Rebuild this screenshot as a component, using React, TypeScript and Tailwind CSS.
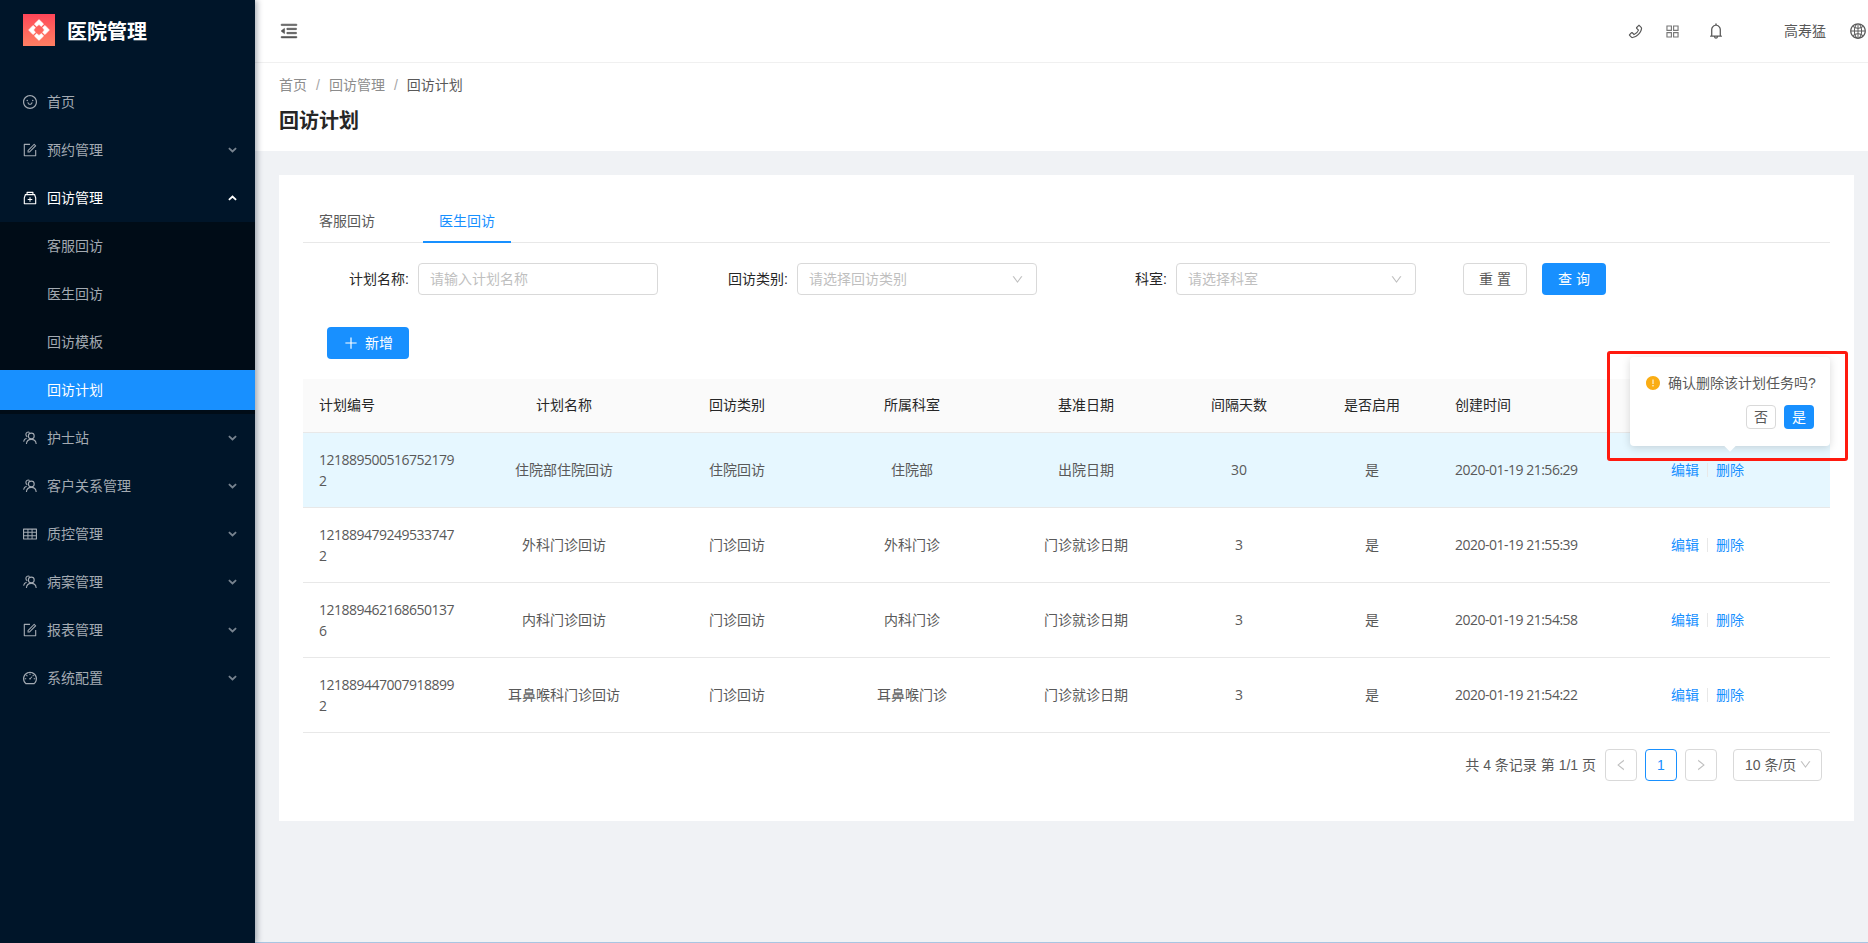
import type { ReactNode } from 'react'
import {
  AiFillExclamationCircle,
  AiOutlineAppstore,
  AiOutlineBell,
  AiOutlineDashboard,
  AiOutlineDown,
  AiOutlineForm,
  AiOutlineGlobal,
  AiOutlineLeft,
  AiOutlineMedicineBox,
  AiOutlineMenuFold,
  AiOutlinePhone,
  AiOutlinePlus,
  AiOutlineRight,
  AiOutlineSmile,
  AiOutlineTable,
} from 'react-icons/ai'

const font = '"Liberation Sans", "Noto Sans CJK SC", sans-serif'

function PeopleIcon({ size, className }: { size?: number; className?: string }) {
  return (
    <svg width={size} height={size} viewBox="0 0 16 16" fill="none" stroke="currentColor" strokeWidth="1.1" className={className}>
      <circle cx="9.3" cy="6" r="2.9" />
      <path d="M4.4 14 C4.7 11 6.7 9.4 9.3 9.4 S13.9 11 14.2 14" />
      <path d="M7.6 2.5 C5.8 1.4 3.8 2.6 3.9 4.6 C4 5.6 4.5 6.2 5.3 6.7" />
      <path d="M1.6 11.6 C1.9 9.7 3 8.7 4.6 8.3" />
    </svg>
  )
}

const menuTop = [
  { label: '首页', icon: AiOutlineSmile, arrow: false },
  { label: '预约管理', icon: AiOutlineForm, arrow: true },
]

const subMenu = ['客服回访', '医生回访', '回访模板', '回访计划']

const menuBottom = [
  { label: '护士站', icon: PeopleIcon },
  { label: '客户关系管理', icon: PeopleIcon },
  { label: '质控管理', icon: AiOutlineTable },
  { label: '病案管理', icon: PeopleIcon },
  { label: '报表管理', icon: AiOutlineForm },
  { label: '系统配置', icon: AiOutlineDashboard },
]

const rows = [
  { id: '1218895005167521792', name: '住院部住院回访', type: '住院回访', dept: '住院部', base: '出院日期', days: 30, time: '2020-01-19 21:56:29' },
  { id: '1218894792495337472', name: '外科门诊回访', type: '门诊回访', dept: '外科门诊', base: '门诊就诊日期', days: 3, time: '2020-01-19 21:55:39' },
  { id: '1218894621686501376', name: '内科门诊回访', type: '门诊回访', dept: '内科门诊', base: '门诊就诊日期', days: 3, time: '2020-01-19 21:54:58' },
  { id: '1218894470079188992', name: '耳鼻喉科门诊回访', type: '门诊回访', dept: '耳鼻喉门诊', base: '门诊就诊日期', days: 3, time: '2020-01-19 21:54:22' },
]

function Chevron({ up, className }: { up?: boolean; className?: string }) {
  return (
    <svg width="9" height="6" viewBox="0 0 8 5" fill="none" stroke="currentColor" strokeWidth="1.6" className={className}>
      <path d={up ? 'M0.8 4.2 L4 1.2 L7.2 4.2' : 'M0.8 0.8 L4 3.8 L7.2 0.8'} />
    </svg>
  )
}

function MenuItem({ label, Icon, arrow = true }: { label: string; Icon: (p: { size?: number; className?: string }) => ReactNode; arrow?: boolean }) {
  return (
    <div className="flex h-10 items-center pl-[22px] pr-[18px] text-[#a3aab2]">
      <Icon size={16} className="mr-[9px] shrink-0" />
      <span className="flex-1">{label}</span>
      {arrow && <Chevron className="text-[#77838f]" />}
    </div>
  )
}

function Field({ label, labelWidth, placeholder, select }: { label: string; labelWidth: string; placeholder: string; select?: boolean }) {
  return (
    <div className="flex items-center">
      <span className={`whitespace-nowrap text-right text-[#262626] ${labelWidth}`}>{label}:</span>
      <div className="ml-[9px] flex h-8 w-60 items-center justify-between rounded border border-[#d9d9d9] pl-[11px] pr-3 text-[#bfbfbf]">
        <span>{placeholder}</span>
        {select && <AiOutlineDown size={13} />}
      </div>
    </div>
  )
}

function PageButton({ children, active }: { children: ReactNode; active?: boolean }) {
  return (
    <div className={`flex h-8 w-8 items-center justify-center rounded border ${active ? 'border-[#1890ff] text-[#1890ff]' : 'border-[#d9d9d9] text-[#bfbfbf]'}`}>
      {children}
    </div>
  )
}

export default function App() {
  return (
    <div className="flex h-[943px] overflow-hidden bg-[#f0f2f5] text-sm text-[#595959]" style={{ fontFamily: font }}>
      {/* Sidebar */}
      <aside className="relative z-10 w-[255px] shrink-0 bg-[#001529] shadow-[2px_0_6px_rgba(0,21,41,0.35)]">
        <div className="flex h-[82px] items-start pl-[23px] pt-[14px]">
          <div className="flex h-8 w-8 items-center justify-center bg-gradient-to-b from-[#ff4458] to-[#ff7f63]">
            <svg width="22" height="22" viewBox="0 0 22 22" fill="#fff" stroke="#fff" strokeWidth="0.6" strokeLinejoin="round">
              <path d="M11 0.6 L15.6 5 L13.4 7.4 L11 5.6 L8.6 7.4 L6.4 5 Z" />
              <path d="M11 21.4 L15.6 17 L13.4 14.6 L11 16.4 L8.6 14.6 L6.4 17 Z" />
              <path d="M0.6 11 L5 6.4 L7.4 8.6 L5.6 11 L7.4 13.4 L5 15.6 Z" />
              <path d="M21.4 11 L17 6.4 L14.6 8.6 L16.4 11 L14.6 13.4 L17 15.6 Z" />
            </svg>
          </div>
          <span className="ml-[12px] mt-[7px] text-xl leading-[22px] font-bold text-white">医院管理</span>
        </div>
        <nav className="flex flex-col gap-2">
          {menuTop.map((m) => (
            <MenuItem key={m.label} label={m.label} Icon={m.icon} arrow={m.arrow} />
          ))}
          <div>
            <div className="flex h-10 items-center pl-[22px] pr-[18px] text-white">
              <AiOutlineMedicineBox size={16} className="mr-[9px] shrink-0" />
              <span className="flex-1">回访管理</span>
              <Chevron up />
            </div>
            <div className="mt-1 flex flex-col gap-2 bg-[#000c17] py-1">
              {subMenu.map((s, i) => (
                <div key={s} className={`flex h-10 items-center pl-[47px] ${i === 3 ? 'bg-[#1890ff] text-white' : 'text-[#a3aab2]'}`}>
                  {s}
                </div>
              ))}
            </div>
          </div>
          <div className="mt-[-4px] flex flex-col gap-2">
            {menuBottom.map((m) => (
              <MenuItem key={m.label} label={m.label} Icon={m.icon} />
            ))}
          </div>
        </nav>
      </aside>

      <div className="min-w-0 flex-1 border-b border-[#a9c5e2]">
        {/* Top bar */}
        <header className="flex h-[63px] items-center border-b border-[#f0f0f0] bg-white pl-[24px] text-[#595959]">
          <AiOutlineMenuFold size={20} className="text-[#555]" strokeWidth={30} />
          <div className="ml-auto flex items-center">
            <AiOutlinePhone size={17} className="mr-[20px]" />
            <AiOutlineAppstore size={17} className="mr-[26px] text-[#777]" />
            <AiOutlineBell size={18} className="mr-[59px]" />
            <span className="mr-[23px]">高寿猛</span>
            <AiOutlineGlobal size={18} className="mr-px" />
          </div>
        </header>

        {/* Page head */}
        <div className="h-[88px] bg-white pl-6 pt-[11px]">
          <div className="flex h-[22px] items-center text-[#8c8c8c]">
            <span>首页</span>
            <span className="mx-[9px] text-[#a6a6a6]">/</span>
            <span>回访管理</span>
            <span className="mx-[9px] text-[#a6a6a6]">/</span>
            <span className="text-[#595959]">回访计划</span>
          </div>
          <h1 className="mt-[13px] text-xl leading-6 font-bold text-[#262626]">回访计划</h1>
        </div>

        {/* Card */}
        <main className="ml-6 mr-[14px] mt-6 h-[646px] bg-white px-6 pt-[24px]">
          <div className="flex h-[44px] items-end gap-8 border-b border-[#e8e8e8]">
            <div className="flex h-[44px] w-[88px] items-center justify-center pt-[2px]">客服回访</div>
            <div className="mb-[-1px] flex h-[45px] w-[88px] items-center justify-center border-b-2 border-[#1890ff] pt-[2px] text-[#1890ff]">医生回访</div>
          </div>

          <div className="mt-5 flex items-center">
            <Field label="计划名称" labelWidth="w-[106px]" placeholder="请输入计划名称" />
            <div className="ml-[70px]">
              <Field label="回访类别" labelWidth="w-[60px]" placeholder="请选择回访类别" select />
            </div>
            <div className="ml-[97px]">
              <Field label="科室" labelWidth="w-[33px]" placeholder="请选择科室" select />
            </div>
            <button className="ml-[47px] h-8 w-16 rounded border border-[#d9d9d9] text-[#595959]">重 置</button>
            <button className="ml-[15px] h-8 w-16 rounded bg-[#1890ff] text-white">查 询</button>
          </div>

          <div className="mt-8 pl-6">
            <button className="flex h-8 w-[82px] items-center justify-center gap-[6px] rounded bg-[#1890ff] text-white">
              <AiOutlinePlus size={16} />
              <span>新增</span>
            </button>
          </div>

          <table className="mt-5 w-full table-fixed border-collapse">
            <colgroup>
              <col className="w-[175px]" />
              <col className="w-[172px]" />
              <col className="w-[174px]" />
              <col className="w-[176px]" />
              <col className="w-[172px]" />
              <col className="w-[134px]" />
              <col className="w-[132px]" />
              <col className="w-[217px]" />
              <col />
            </colgroup>
            <thead>
              <tr className="h-[53px] border-b border-[#e8e8e8] bg-[#fafafa] text-[#262626]">
                <th className="pl-4 text-left font-normal">计划编号</th>
                <th className="font-normal">计划名称</th>
                <th className="font-normal">回访类别</th>
                <th className="font-normal">所属科室</th>
                <th className="font-normal">基准日期</th>
                <th className="font-normal">间隔天数</th>
                <th className="font-normal">是否启用</th>
                <th className="pl-[17px] text-left font-normal">创建时间</th>
                <th />
              </tr>
            </thead>
            <tbody>
              {rows.map((r, i) => (
                <tr key={r.id} className={`h-[75px] border-b border-[#e8e8e8] ${i === 0 ? 'bg-[#e6f7ff]' : ''}`}>
                  <td className="break-all pl-4 pr-[22px] font-['Open_Sans'] leading-[21px] tracking-[-0.5px]">{r.id}</td>
                  <td className="text-center">{r.name}</td>
                  <td className="text-center">{r.type}</td>
                  <td className="text-center">{r.dept}</td>
                  <td className="text-center">{r.base}</td>
                  <td className="text-center font-['Open_Sans']">{r.days}</td>
                  <td className="text-center">是</td>
                  <td className="pl-[17px] font-['Open_Sans'] tracking-[-0.5px]">{r.time}</td>
                  <td className="pl-4">
                    <div className="flex items-center text-[#1890ff]">
                      <span>编辑</span>
                      <span className="mx-2 h-[14px] w-px bg-[#e8e8e8]" />
                      <span>删除</span>
                    </div>
                  </td>
                </tr>
              ))}
            </tbody>
          </table>

          <div className="mt-4 flex items-center justify-end pr-2">
            <span className="mr-[9px]">共 4 条记录 第 1/1 页</span>
            <div className="flex items-center gap-2">
              <PageButton><AiOutlineLeft size={14} /></PageButton>
              <PageButton active>1</PageButton>
              <PageButton><AiOutlineRight size={14} /></PageButton>
            </div>
            <div className="ml-4 flex h-8 w-[89px] items-center justify-between whitespace-nowrap rounded border border-[#d9d9d9] pl-[11px] pr-[9px]">
              <span>10 条/页</span>
              <AiOutlineDown size={13} className="text-[#bfbfbf]" />
            </div>
          </div>
        </main>
      </div>

      {/* Delete confirm popover */}
      <div className="absolute left-[1630px] top-[357px] z-20 h-[89px] w-[200px] rounded bg-white shadow-[0_2px_8px_rgba(0,0,0,0.15)]">
        <div className="flex items-center pl-4 pt-[16px]">
          <AiFillExclamationCircle size={16} className="mr-[7px] ml-[-1px] text-[#faad14]" />
          <span>确认删除该计划任务吗?</span>
        </div>
        <div className="mt-[12px] flex justify-end gap-2 pr-4">
          <button className="h-6 w-[30px] rounded border border-[#d9d9d9] text-[#595959]">否</button>
          <button className="h-6 w-[30px] rounded bg-[#1890ff] text-white">是</button>
        </div>
        <div className="absolute bottom-[-4px] left-[96px] h-2 w-2 rotate-45 bg-white" />
      </div>

      {/* Red annotation box */}
      <div className="absolute left-[1607px] top-[351px] z-30 h-[110px] w-[241px] rounded-[3px] border-[3px] border-[#ff1a0f]" />
    </div>
  )
}
